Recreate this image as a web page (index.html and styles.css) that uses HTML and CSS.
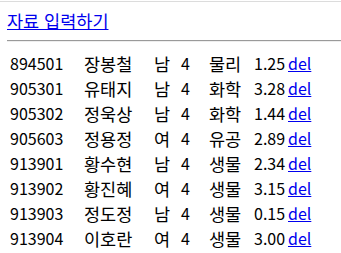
FILE: index.html
```html
<!DOCTYPE html>
<html lang="ko">
<head>
<meta charset="utf-8">
<title>자료</title>
<link rel="stylesheet" href="styles.css">
</head>
<body>
<div class="page">
  <a class="add-link" href="#">자료 입력하기</a>
  <hr class="rule">
  <div class="list">
    <div class="row"><span>894501</span><span class="ko">장봉철</span><span class="ko">남</span><span>4</span><span class="ko">물리</span><span>1.25</span><a href="#">del</a></div>
    <div class="row"><span>905301</span><span class="ko">유태지</span><span class="ko">남</span><span>4</span><span class="ko">화학</span><span>3.28</span><a href="#">del</a></div>
    <div class="row"><span>905302</span><span class="ko">정욱상</span><span class="ko">남</span><span>4</span><span class="ko">화학</span><span>1.44</span><a href="#">del</a></div>
    <div class="row"><span>905603</span><span class="ko">정용정</span><span class="ko">여</span><span>4</span><span class="ko">유공</span><span>2.89</span><a href="#">del</a></div>
    <div class="row"><span>913901</span><span class="ko">황수현</span><span class="ko">남</span><span>4</span><span class="ko">생물</span><span>2.34</span><a href="#">del</a></div>
    <div class="row"><span>913902</span><span class="ko">황진혜</span><span class="ko">여</span><span>4</span><span class="ko">생물</span><span>3.15</span><a href="#">del</a></div>
    <div class="row"><span>913903</span><span class="ko">정도정</span><span class="ko">남</span><span>4</span><span class="ko">생물</span><span>0.15</span><a href="#">del</a></div>
    <div class="row"><span>913904</span><span class="ko">이호란</span><span class="ko">여</span><span>4</span><span class="ko">생물</span><span>3.00</span><a href="#">del</a></div>
  </div>
</div>
</body>
</html>
```

FILE: styles.css
```css
html, body {
  margin: 0;
  padding: 0;
  background: #fff;
}
body {
  font-family: "Noto Sans CJK KR", "Noto Sans", sans-serif;
  font-size: 16px;
  color: #000;
}
.page {
  margin-top: 1px;
  border-top: 1px solid #dcdcdc;
  padding: 7px 0 0 7px;
}
.add-link {
  display: block;
  font-size: 17.5px;
  line-height: 24px;
  color: #0000ee;
  text-decoration: underline;
}
.rule {
  margin: 7px 0 0 0;
  border: 0;
  border-top: 1px solid #9a9a9a;
  border-bottom: 1px solid #eeeeee;
  height: 0;
}
.list {
  display: flex;
  flex-direction: column;
  padding: 9px 0 0 3px;
}
.row {
  display: grid;
  grid-template-columns: 74px 70px 27px 28px 45px 34px auto;
  align-items: start;
  height: 25px;
  line-height: 25px;
  white-space: nowrap;
}
.ko {
  font-size: 17.5px;
}
.row a {
  color: #0000ee;
  text-decoration: underline;
}
```
